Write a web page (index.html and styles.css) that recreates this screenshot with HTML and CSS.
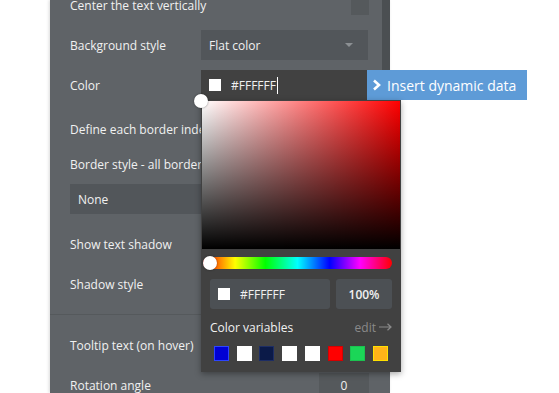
FILE: index.html
```html
<!DOCTYPE html>
<html lang="en">
<head>
    <meta charset="UTF-8">
    <meta name="viewport" content="width=device-width, initial-scale=1.0">
    <title>Property editor</title>
    <link rel="stylesheet" href="styles.css">
</head>
<body>
    <div class="panel">
        <div class="scroll-thumb"></div>
        <div class="props">
            <div class="prop-row first">
                <div class="prop-label nowrap">Center the text vertically</div>
                <div class="prop-control end">
                    <div class="checkbox"></div>
                </div>
            </div>

            <div class="prop-row">
                <div class="prop-label">Background style</div>
                <div class="dropdown">
                    <span>Flat color</span>
                    <span class="caret"></span>
                </div>
            </div>

            <div class="prop-row">
                <div class="prop-label">Color</div>
                <div class="color-field">
                    <div class="color-input">
                        <span class="swatch-small"></span>
                        <span class="hex-text">#FFFFFF</span><span class="text-cursor"></span>
                    </div>

                    <!-- color picker popup -->
                    <div class="picker">
                        <div class="sv-area"></div>
                        <div class="hue-bar"></div>
                        <div class="picker-row">
                            <div class="hex-box">
                                <span class="swatch-small"></span>
                                <span>#FFFFFF</span>
                            </div>
                            <div class="alpha-box">100%</div>
                        </div>
                        <div class="vars-head">
                            <span>Color variables</span>
                            <span class="edit-link">edit
                                <svg width="13" height="8" viewBox="0 0 13 8"><path d="M0 4H12M8.5 0.8L12 4L8.5 7.2" fill="none" stroke="#8a8a8a" stroke-width="1.2"/></svg>
                            </span>
                        </div>
                        <div class="vars">
                            <span class="var-swatch" style="background:#0000d4;border-color:#2c44ff"></span>
                            <span class="var-swatch" style="background:#ffffff;border-color:#ffffff"></span>
                            <span class="var-swatch" style="background:#0b1a48;border-color:#1d2d64"></span>
                            <span class="var-swatch" style="background:#ffffff;border-color:#ffffff"></span>
                            <span class="var-swatch" style="background:#ffffff;border-color:#ffffff"></span>
                            <span class="var-swatch" style="background:#ff0000;border-color:#d60000"></span>
                            <span class="var-swatch" style="background:#1bd657;border-color:#1bc24f"></span>
                            <span class="var-swatch" style="background:#ffb319;border-color:#ffe000"></span>
                        </div>
                        <span class="handle sv-handle"></span>
                        <span class="handle hue-handle"></span>
                    </div>
                </div>
                <div class="dynamic-btn">
                    <svg width="10" height="12" viewBox="0 0 10 12"><polyline points="2,1.5 7,6 2,10.5" fill="none" stroke="#fff" stroke-width="2.6" stroke-linejoin="miter"/></svg>
                    <span>Insert dynamic data</span>
                </div>
            </div>

            <div class="prop-row tall">
                <div class="prop-label nowrap">Define each border independently</div>
            </div>

            <div class="prop-row short">
                <div class="prop-label nowrap">Border style - all borders</div>
            </div>

            <div class="dropdown wide">
                <span>None</span>
            </div>

            <div class="prop-row spaced">
                <div class="prop-label">Show text shadow</div>
            </div>

            <div class="prop-row">
                <div class="prop-label">Shadow style</div>
            </div>

            <div class="separator"></div>

            <div class="prop-row">
                <div class="prop-label">Tooltip text (on hover)</div>
            </div>

            <div class="prop-row">
                <div class="prop-label">Rotation angle</div>
                <div class="prop-control end">
                    <div class="num-input">0</div>
                </div>
            </div>
        </div>
    </div>
</body>
</html>
```

FILE: styles.css
```css
body {
    margin: 0;
    background: #fff;
    height: 393px;
    overflow: hidden;
    font-family: "Open Sans", "Liberation Sans", sans-serif;
    font-size: 12px;
    color: #f1f1f1;
}

.panel {
    display: flow-root; /* keep the scrolled list from pulling the panel up */
    position: relative;
    margin-left: 50px;
    width: 340px;
    height: 393px;
    background: #5f6367;
    box-shadow: -1px 0 3px rgba(0, 0, 0, 0.15);
}
.scroll-thumb {
    position: absolute;
    right: 0;
    top: 0;
    width: 8px;
    height: 300px;
    background: #4b4f52;
}
.props {
    padding: 0 21px 0 20px;
    margin-top: -14px;
}

.prop-row {
    display: flex;
    align-items: center;
    height: 40px;
}
.prop-row.first {
    height: 39px;
}
.prop-row.tall {
    height: 48px;
}
.prop-row.short {
    height: 22px;
}
.prop-row.spaced {
    margin-top: 10px;
}
.prop-label {
    width: 131px;
    flex-shrink: 0;
    color: #f1f1f1;
}
.nowrap {
    white-space: nowrap;
}
.prop-control {
    flex-grow: 1;
    display: flex;
}
.prop-control.end {
    justify-content: flex-end;
}

.checkbox {
    width: 18px;
    height: 18px;
    background: #55595c;
}

.dropdown {
    width: 167px;
    height: 30px;
    box-sizing: border-box;
    padding: 0 8px;
    background: #52565a;
    display: flex;
    align-items: center;
    justify-content: space-between;
}
.dropdown.wide {
    width: 299px;
    margin-top: 9px;
}
.caret {
    width: 0;
    height: 0;
    margin-right: 7px;
    border-left: 4px solid transparent;
    border-right: 4px solid transparent;
    border-top: 4px solid #8c9093;
}

.color-field {
    position: relative;
    width: 166px;
    flex-shrink: 0;
}
.color-input {
    height: 30px;
    background: #414141;
    display: flex;
    align-items: center;
    padding-left: 8px;
}
.swatch-small {
    width: 12px;
    height: 12px;
    background: #fff;
    margin-right: 10px;
    flex-shrink: 0;
}
.text-cursor {
    width: 1px;
    height: 17px;
    background: #fff;
    margin-left: 1px;
}

.dynamic-btn {
    position: relative; /* sits above the scrollbar */
    flex-shrink: 0;
    width: 160px;
    height: 30px;
    box-sizing: border-box;
    background: #5e9bd7;
    color: #fff;
    font-size: 14px;
    display: flex;
    align-items: center;
    padding-left: 5px;
    gap: 5px;
}

/* picker */
.picker {
    position: absolute;
    top: 30px;
    left: 0;
    width: 200px;
    box-sizing: border-box;
    padding: 1px 1px 11px;
    background: #414141;
    box-shadow: 0 2px 6px rgba(0, 0, 0, 0.35);
    z-index: 5;
}
.sv-area {
    height: 148px;
    background: linear-gradient(to top, #000, rgba(0, 0, 0, 0)),
                linear-gradient(to right, #fff, #f00);
}
.hue-bar {
    height: 12px;
    margin: 8px 8px 0 1px;
    border-radius: 6px;
    background: linear-gradient(to right, #f00, #ff0 17%, #0f0 33%, #0ff 50%, #00f 67%, #f0f 83%, #f00);
}
.picker-row {
    display: flex;
    gap: 6px;
    margin: 10px 8px 0;
}
.hex-box, .alpha-box {
    height: 30px;
    background: #4c5054;
    border-radius: 3px;
    display: flex;
    align-items: center;
}
.hex-box {
    width: 120px;
    padding-left: 8px;
    box-sizing: border-box;
}
.alpha-box {
    flex-grow: 1;
    justify-content: center;
    font-weight: 600;
}
.vars-head {
    display: flex;
    justify-content: space-between;
    align-items: center;
    height: 20px;
    margin: 8px 8px 0;
}
.edit-link {
    color: #8a8a8a;
    display: flex;
    align-items: center;
    gap: 3px;
}
.vars {
    display: flex;
    justify-content: space-between;
    margin: 9px 12px 0 12px;
}
.var-swatch {
    width: 15px;
    height: 15px;
    box-sizing: border-box;
    border: 1px solid;
}

.handle {
    position: absolute;
    width: 14px;
    height: 14px;
    border-radius: 50%;
    background: #fff;
    box-shadow: 0 0 2px rgba(0, 0, 0, 0.5);
}
.sv-handle {
    left: -7px;
    top: -6px;
}
.hue-handle {
    left: 2px;
    top: 156px;
}

.separator {
    height: 1px;
    background: #55595c;
    margin: 10px -21px 10px -20px;
}

.num-input {
    width: 50px;
    height: 24px;
    background: #55595c;
    display: flex;
    align-items: center;
    justify-content: center;
}
```
